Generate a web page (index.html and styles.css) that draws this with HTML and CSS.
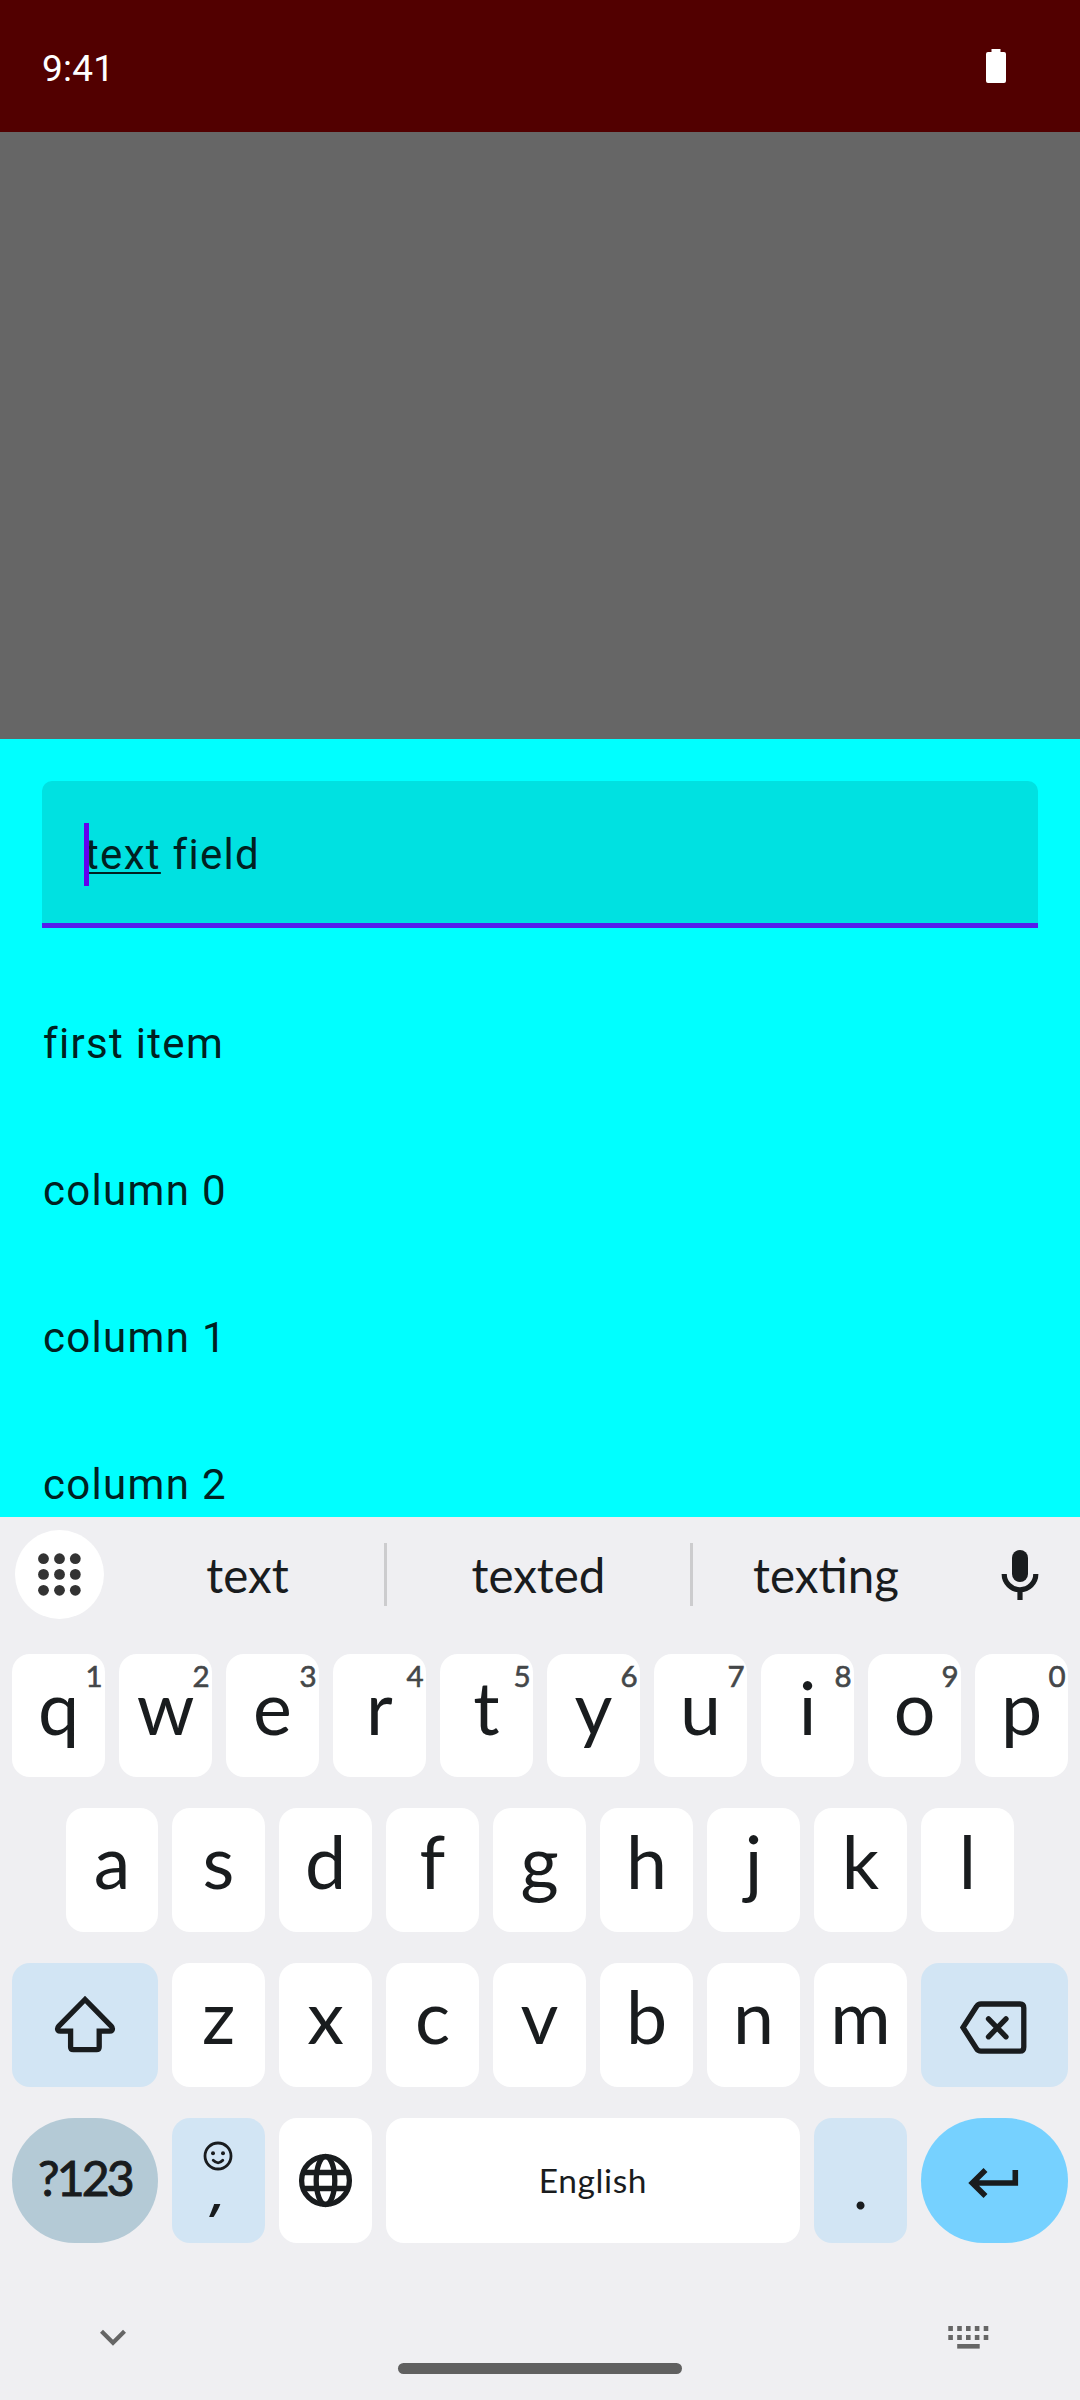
FILE: index.html
```html
<!DOCTYPE html>
<html lang="en">
<head>
<meta charset="utf-8">
<title>Bottom sheet</title>
<link rel="stylesheet" href="styles.css">
</head>
<body>
<div class="screen">
  <header class="status">
    <span class="time">9:41</span>
    <svg class="battery" width="20" height="34" viewBox="0 0 20 34"><path d="M5.5 0h9v3H18a2 2 0 0 1 2 2v27a2 2 0 0 1-2 2H2a2 2 0 0 1-2-2V5a2 2 0 0 1 2-2h3.500z"/></svg>
  </header>
  <div class="scrim"></div>
  <main class="sheet">
    <div class="field"><span class="cursor"></span><span class="composing">text</span> field</div>
    <ul class="list">
      <li>first item</li>
      <li>column 0</li>
      <li>column 1</li>
      <li>column 2</li>
    </ul>
  </main>
  <section class="keyboard">
    <div class="suggestions">
      <div class="apps">
        <svg width="89" height="89" viewBox="0 0 89 89" fill="#333"><circle cx="28.500" cy="28.700" r="5.400"/><circle cx="44.500" cy="28.700" r="5.400"/><circle cx="60.300" cy="28.700" r="5.400"/><circle cx="28.500" cy="44.400" r="5.400"/><circle cx="44.500" cy="44.400" r="5.400"/><circle cx="60.300" cy="44.400" r="5.400"/><circle cx="28.500" cy="60.300" r="5.400"/><circle cx="44.500" cy="60.300" r="5.400"/><circle cx="60.300" cy="60.300" r="5.400"/></svg>
      </div>
      <span class="word word-a">text</span>
      <i class="divider"></i>
      <span class="word word-b">texted</span>
      <i class="divider"></i>
      <span class="word word-c">texting</span>
      <svg class="mic" width="38" height="50" viewBox="0 0 38 50"><rect x="11" y="0" width="16" height="32" rx="8" fill="#191c1e"/><path d="M3.200 24a15.800 15.800 0 0 0 31.600 0M19 40v10" fill="none" stroke="#191c1e" stroke-width="5.200"/></svg>
    </div>
    <div class="row row-1">
      <div class="key">q<sup>1</sup></div><div class="key">w<sup>2</sup></div><div class="key">e<sup>3</sup></div><div class="key">r<sup>4</sup></div><div class="key">t<sup>5</sup></div><div class="key">y<sup>6</sup></div><div class="key">u<sup>7</sup></div><div class="key">i<sup>8</sup></div><div class="key">o<sup>9</sup></div><div class="key">p<sup>0</sup></div>
    </div>
    <div class="row row-2">
      <div class="key first">a</div><div class="key">s</div><div class="key">d</div><div class="key">f</div><div class="key">g</div><div class="key">h</div><div class="key">j</div><div class="key">k</div><div class="key">l</div>
    </div>
    <div class="row row-3">
      <div class="key tinted shift"><svg width="146" height="124" viewBox="0 0 146 124"><path d="M73 36.500L46.800 63.200c-2.200 2.300-1.300 5 1.700 5H58.600V84q0 2.700 2.700 2.700H84.500q2.700 0 2.700-2.700V68.200H97.500c3 0 3.900-2.700 1.700-5z"/></svg></div>
      <div class="key">z</div><div class="key">x</div><div class="key">c</div><div class="key">v</div><div class="key">b</div><div class="key">n</div><div class="key">m</div>
      <div class="key tinted wide"><svg width="147" height="124" viewBox="0 0 147 124"><path d="M42 64.500L55.500 43.500Q57 41 60 41H99Q102.800 41 102.800 45V84Q102.800 88.200 99 88.200H60Q57 88.200 55.500 85.700Z"/><path d="M67.500 55.800L85 73.800M85 55.800L67.500 73.800" stroke-linecap="round"/></svg></div>
    </div>
    <div class="row row-4">
      <div class="key symbols">?123</div>
      <div class="key tinted comma"><svg width="30" height="30" viewBox="0 0 30 30"><circle cx="15" cy="15" r="13" stroke-width="2.800"/><path d="M10.200 19.300q5 5 9.600 0" stroke-width="2.800" stroke-linecap="round"/><circle cx="10" cy="12.200" r="2" class="dot"/><circle cx="20" cy="12.200" r="2" class="dot"/></svg><span>,</span></div>
      <div class="key"><svg width="93" height="125" viewBox="0 0 93 125"><circle cx="46.500" cy="62.500" r="23.900"/><ellipse cx="46.500" cy="62.500" rx="9.300" ry="24"/><path d="M25.500 54.500H67.500M25.500 70.500H67.500"/></svg></div>
      <div class="key space">English</div>
      <div class="key tinted period">.</div>
      <div class="key enter"><svg width="147" height="125" viewBox="0 0 147 125"><path d="M64.500 52L51.300 65L64.500 78M52 65H94.300V52" stroke-width="5.600"/></svg></div>
    </div>
    <footer class="nav">
      <svg class="collapse" width="28" height="18" viewBox="0 0 28 18"><path d="M2.500 2.200L14 13.800L25.500 2.200" fill="none" stroke="#666" stroke-width="4.200"/></svg>
      <i class="home"></i>
      <svg class="switcher" width="41" height="24" viewBox="0 0 41 24"><path d="M2.600 0v5M11.500 0v5M20.300 0v5M29.100 0v5M38 0v5M2.600 9v5M11.500 9v5M20.300 9v5M29.100 9v5M38 9v5" stroke="#666" stroke-width="4.600"/><rect x="9.200" y="18" width="22.500" height="4.600" fill="#666"/></svg>
    </footer>
  </section>
</div>
</body>
</html>
```
FILE: styles.css
```css
* { box-sizing: border-box; }
body { margin: 0; }
.screen {
  width: 1080px;
  height: 2400px;
  display: flex;
  flex-direction: column;
  overflow: hidden;
  background: #666;
  font-family: Roboto, sans-serif;
}
.status {
  height: 132px;
  flex: none;
  display: flex;
  justify-content: space-between;
  align-items: center;
  padding: 0 74px 0 42px;
  background: #520000;
}
.time { color: #fff; font-size: 37px; line-height: 44px; padding-top: 5px; letter-spacing: 0.200px; }
.battery { fill: #fff; }
.scrim { height: 607px; flex: none; }

.sheet {
  height: 778px;
  flex: none;
  overflow: hidden;
  background: #0ff;
  padding: 42px 42px 0;
  font-size: 42px;
  letter-spacing: 1.3125px;
  color: #002121;
}
.field {
  position: relative;
  height: 147px;
  padding-left: 43px;
  line-height: 148px;
  white-space: pre;
  background: #00e1e1;
  border-radius: 10px 10px 0 0;
  border-bottom: 5px solid #551dec;
}
.composing {
  text-decoration: underline;
  text-decoration-thickness: 2px;
  text-underline-offset: 3px;
  text-decoration-skip-ink: none;
}
.cursor { position: absolute; left: 42px; top: 42px; width: 5px; height: 63px; background: #6200ee; }
.list { list-style: none; margin: 42px 0 0; padding: 0 0 0 1px; }
.list li { height: 147px; line-height: 148px; }

.keyboard {
  height: 883px;
  flex: none;
  display: flex;
  flex-direction: column;
  background: #efeff2;
  font-family: Lato, sans-serif;
  color: #191c1e;
}
.suggestions {
  height: 115px;
  display: flex;
  align-items: center;
  padding: 0 41px 0 15px;
}
.apps { width: 89px; height: 89px; border-radius: 50%; background: #fff; }
.apps svg { display: block; }
.word { font-size: 47.500px; line-height: 113px; text-align: center; }
.word-a { width: 280px; padding-left: 7px; }
.word-b { width: 303px; }
.word-c { width: 266px; }
.divider { width: 3px; height: 63px; background: #ccccce; }
.mic { margin-left: auto; }

.row { display: flex; gap: 14px; padding: 0 12px; margin-bottom: 31px; height: 124px; flex: none; }
.row-1 { margin-top: 22px; height: 123px; }
.row-2 { padding-left: 66px; }
.row-4 { height: 125px; margin-bottom: 0; }
.key {
  position: relative;
  width: 93px;
  border-radius: 18px;
  background: #fff;
  text-align: center;
  font-size: 73.500px;
  line-height: 105px;
}
.key.first { width: 92px; }
.key svg { display: block; fill: none; stroke: #191c1e; stroke-width: 5.300; }
.key sup {
  position: absolute;
  top: 7px;
  right: 3px;
  font-size: 29.500px;
  line-height: 30px;
  letter-spacing: -0.500px;
  color: #444749;
  -webkit-text-stroke: 0.600px #444749;
}
.tinted { background: #d2e5f4; }
.key.shift { width: 146px; }
.wide { width: 147px; }
.symbols {
  width: 146px;
  border-radius: 63px;
  background: #b4cad6;
  font-size: 48px;
  line-height: 120px;
  letter-spacing: -2.800px;
  -webkit-text-stroke: 1px #191c1e;
}
.key.comma svg { margin: 23px auto 0 31px; }
.comma .dot { fill: #191c1e; stroke: none; }
.comma span { display: block; font: italic 600 52px/52px "Open Sans", sans-serif; margin-top: -7px; }
.space { width: 414px; font-size: 33.500px; line-height: 124px; letter-spacing: 0.600px; }
.period { font-size: 64px; line-height: 133px; }
.enter { width: 147px; border-radius: 63px; background: #76d1ff; }

.nav { flex: 1; display: flex; align-items: flex-start; }
.collapse { margin: 86px 0 0 99px; }
.home { width: 284px; height: 11px; border-radius: 6px; background: #606060; margin: 120px 0 0 271px; }
.switcher { margin: 83px 0 0 266px; }
```
